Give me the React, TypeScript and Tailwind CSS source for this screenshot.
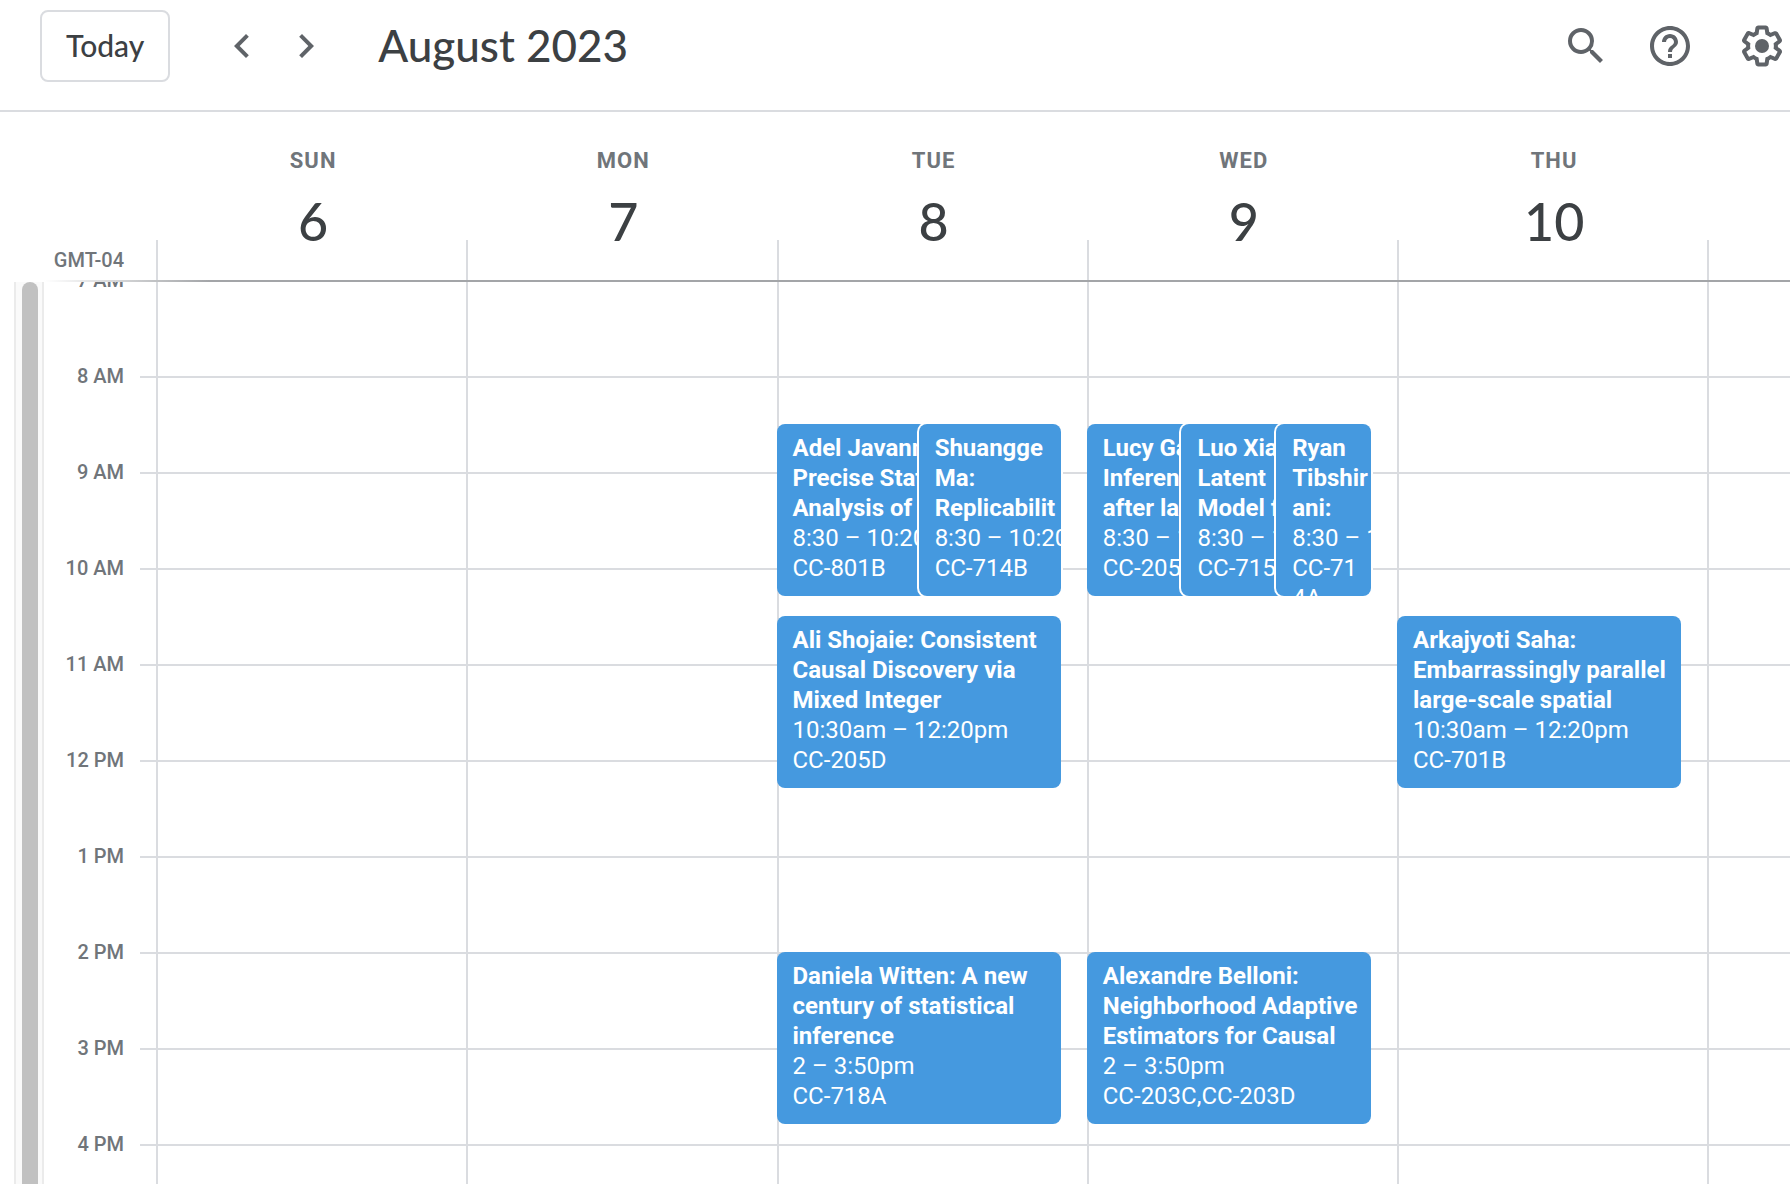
import { MdChevronLeft, MdChevronRight, MdHelpOutline, MdSearch } from "react-icons/md";

type CalendarEvent = {
  title: string[];
  time: string;
  place: string[];
  /** Hours after 7 AM. */
  start: number;
  /** Horizontal position and width, as a share of the day's event area. */
  left?: number;
  width?: number;
};

type Day = { name: string; date: number; events: CalendarEvent[] };

const HOUR_HEIGHT = 96;
const EVENT_HEIGHT = 172;

const HOURS = ["7 AM", "8 AM", "9 AM", "10 AM", "11 AM", "12 PM", "1 PM", "2 PM", "3 PM", "4 PM"];

const DAYS: Day[] = [
  { name: "SUN", date: 6, events: [] },
  { name: "MON", date: 7, events: [] },
  {
    name: "TUE",
    date: 8,
    events: [
      { title: ["Adel Javanm", "Precise Stat", "Analysis of"], time: "8:30 – 10:20", place: ["CC-801B"], start: 1.5, left: 0, width: 53 },
      { title: ["Shuangge", "Ma:", "Replicabilit"], time: "8:30 – 10:20", place: ["CC-714B"], start: 1.5, left: 50, width: 50 },
      { title: ["Ali Shojaie: Consistent", "Causal Discovery via", "Mixed Integer"], time: "10:30am – 12:20pm", place: ["CC-205D"], start: 3.5 },
      { title: ["Daniela Witten: A new", "century of statistical", "inference"], time: "2 – 3:50pm", place: ["CC-718A"], start: 7 },
    ],
  },
  {
    name: "WED",
    date: 9,
    events: [
      { title: ["Lucy Ga", "Inferen", "after la"], time: "8:30 – 1", place: ["CC-205"], start: 1.5, left: 0, width: 37 },
      { title: ["Luo Xia", "Latent", "Model f"], time: "8:30 – 1", place: ["CC-715"], start: 1.5, left: 33.33, width: 37 },
      { title: ["Ryan", "Tibshir", "ani:"], time: "8:30 – 1", place: ["CC-71", "4A"], start: 1.5, left: 66.66, width: 33.34 },
      { title: ["Alexandre Belloni:", "Neighborhood Adaptive", "Estimators for Causal"], time: "2 – 3:50pm", place: ["CC-203C,CC-203D"], start: 7 },
    ],
  },
  {
    name: "THU",
    date: 10,
    events: [
      { title: ["Arkajyoti Saha:", "Embarrassingly parallel", "large-scale spatial"], time: "10:30am – 12:20pm", place: ["CC-701B"], start: 3.5 },
    ],
  },
];

function SettingsIcon() {
  return (
    <svg viewBox="0 0 24 24" className="size-12" fill="currentColor" aria-hidden="true">
      <path d="M13.85 22.25h-3.7c-.74 0-1.36-.54-1.45-1.27l-.27-1.89c-.27-.14-.53-.29-.79-.46l-1.8.72c-.7.26-1.47-.03-1.81-.65L2.2 15.53c-.35-.66-.2-1.44.36-1.88l1.53-1.19c-.01-.15-.02-.3-.02-.46 0-.15.01-.31.02-.46l-1.52-1.19c-.59-.45-.74-1.26-.37-1.88l1.85-3.19c.34-.62 1.11-.9 1.79-.63l1.81.73c.26-.17.52-.32.78-.46l.27-1.91c.09-.7.71-1.25 1.44-1.25h3.7c.74 0 1.36.54 1.45 1.27l.27 1.89c.27.14.53.29.79.46l1.8-.72c.71-.26 1.48.03 1.82.65l1.84 3.18c.36.66.2 1.44-.36 1.88l-1.52 1.19c.01.15.02.3.02.46s-.01.31-.02.46l1.52 1.19c.56.45.72 1.23.37 1.86l-1.86 3.22c-.34.62-1.11.9-1.8.63l-1.8-.72c-.26.17-.52.32-.78.46l-.27 1.91c-.1.68-.72 1.22-1.46 1.22zm-3.23-2h2.76l.37-2.55.53-.22c.44-.18.88-.44 1.34-.78l.45-.34 2.38.96 1.38-2.4-2.03-1.58.07-.56c.03-.26.06-.51.06-.78s-.03-.53-.06-.78l-.07-.56 2.03-1.58-1.39-2.4-2.39.96-.45-.35c-.42-.32-.87-.58-1.33-.77l-.52-.22-.37-2.55h-2.76l-.37 2.55-.53.21c-.44.19-.88.44-1.34.79l-.45.33-2.38-.95-1.39 2.39 2.03 1.58-.07.56a7 7 0 0 0-.06.79c0 .26.02.53.06.78l.07.56-2.03 1.58 1.38 2.4 2.39-.96.45.35c.43.33.86.58 1.33.77l.53.22.38 2.55z" />
      <circle cx="12" cy="12" r="3.5" />
    </svg>
  );
}

function EventCard({ event }: { event: CalendarEvent }) {
  return (
    <button
      type="button"
      className={`absolute flex flex-col items-start overflow-hidden rounded-lg bg-[#4599df] px-4 pt-[9px] text-left text-2xl/[30px] whitespace-nowrap text-white ${
        event.left ? "ring-2 ring-white" : ""
      }`}
      style={{
        top: event.start * HOUR_HEIGHT,
        height: EVENT_HEIGHT,
        left: `${event.left ?? 0}%`,
        width: `${event.width ?? 100}%`,
      }}
    >
      {event.title.map((line) => (
        <span key={line} className="font-bold">{line}</span>
      ))}
      <span>{event.time}</span>
      {event.place.map((line) => (
        <span key={line}>{line}</span>
      ))}
    </button>
  );
}

function HourCells() {
  return (
    <>
      {HOURS.map((hour) => (
        <div key={hour} className="h-24 border-t-2 border-[#dadce0]" />
      ))}
    </>
  );
}

export default function App() {
  return (
    <div className="flex h-screen flex-col overflow-hidden bg-white font-[Roboto,sans-serif] text-[#3c4043]">
      <header className="flex shrink-0 items-center border-b-2 border-[#dadce0] pt-2.5 pr-1 pb-7 pl-10 text-[#5f6368]">
        <button type="button" className="h-18 rounded-lg border-2 border-[#dadce0] px-6 pb-0.5 font-[Lato,sans-serif] text-[30px] font-medium text-[#3c4043]">
          Today
        </button>
        <button type="button" aria-label="Previous week" className="ml-12">
          <MdChevronLeft className="size-12" />
        </button>
        <button type="button" aria-label="Next week" className="ml-4">
          <MdChevronRight className="size-12" />
        </button>
        <h1 className="ml-12 pb-0.5 font-[Lato,sans-serif] text-[44px]/[48px] font-medium text-[#3c4043]">August 2023</h1>
        <button type="button" aria-label="Search" className="ml-auto">
          <MdSearch className="size-12" />
        </button>
        <button type="button" aria-label="Support" className="ml-9">
          <MdHelpOutline className="size-12" />
        </button>
        <button type="button" aria-label="Settings" className="ml-11">
          <SettingsIcon />
        </button>
      </header>

      <div className="flex h-42 shrink-0">
        <div className="flex w-39 shrink-0 items-end justify-end pr-8 pb-2 text-xl/6 font-medium text-[#70757a]">GMT-04</div>
        <div className="grid flex-1 grid-cols-[repeat(5,minmax(0,15fr))_minmax(0,4fr)]">
          {DAYS.map((day) => (
            <div key={day.name} className="relative flex flex-col items-center pt-[37px] pl-1">
              <div className="text-[22px]/6 font-bold tracking-wider text-[#70757a]">{day.name}</div>
              <div className="mt-[18px] font-[Lato,sans-serif] text-[52px]/[60px] font-medium">{day.date}</div>
              <div className="absolute bottom-0 left-0 h-10 border-l-2 border-[#dadce0]" />
            </div>
          ))}
          <div className="h-10 self-end border-l-2 border-[#dadce0]" />
        </div>
      </div>

      <main className="relative flex min-h-0 flex-1 overflow-hidden">
        <div className="ml-3.5 flex w-[30px] shrink-0 border-x-2 border-[#ebebeb] bg-[#fafafa] pt-0.5 pl-1.5">
          <div className="w-4 rounded-t-full bg-[#c1c1c1]" />
        </div>
        <div className="-mt-12 w-24 shrink-0 pr-4 text-right text-xl/6 font-medium text-[#70757a]">
          {HOURS.map((hour) => (
            <div key={hour} className="flex h-24 items-center justify-end">{hour}</div>
          ))}
        </div>
        <div className="w-4 shrink-0">
          <HourCells />
        </div>
        <div className="grid flex-1 grid-cols-[repeat(5,minmax(0,15fr))_minmax(0,4fr)]">
          {DAYS.map((day) => (
            <section key={day.name} aria-label={`${day.name} ${day.date}`} className="relative border-l-2 border-[#dadce0]">
              <HourCells />
              <div className="absolute inset-y-0 right-[26px] -left-0.5">
                {day.events.map((event) => (
                  <EventCard key={event.title[0]} event={event} />
                ))}
              </div>
            </section>
          ))}
          <div className="border-l-2 border-[#dadce0]">
            <HourCells />
          </div>
        </div>
        <div className="absolute inset-x-0 top-0 h-0.5 bg-linear-to-r from-white from-[44px] to-[#a3a5a8] to-[210px]" />
      </main>
    </div>
  );
}
